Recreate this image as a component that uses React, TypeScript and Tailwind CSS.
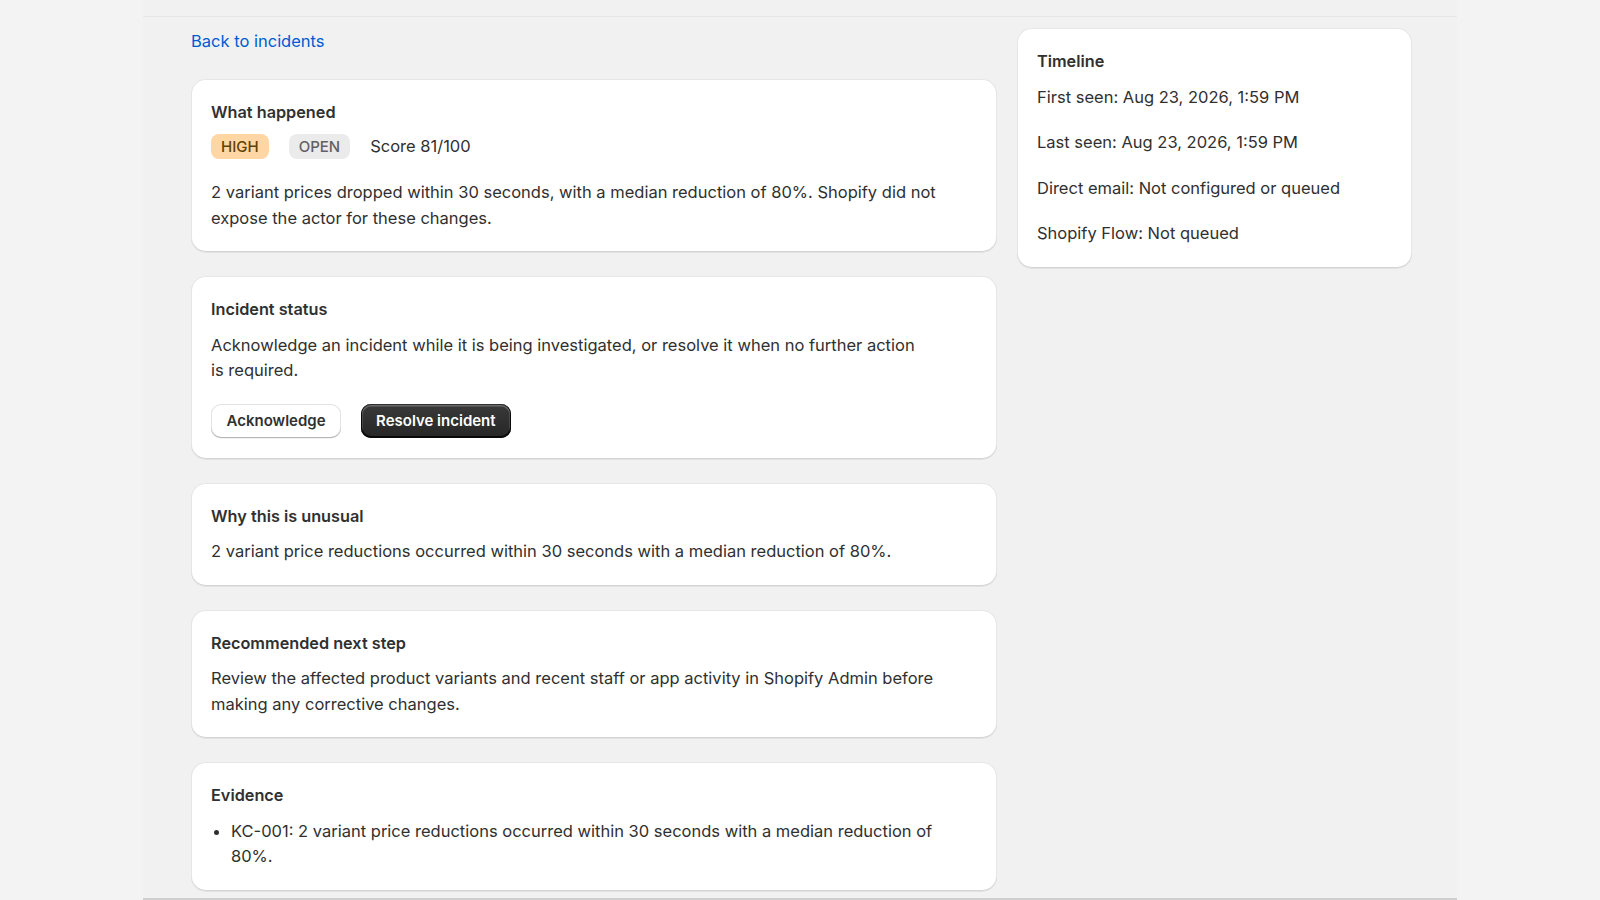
import React from 'react';

interface CardProps {
  title: string;
  children: React.ReactNode;
}

// Admin-style surface card with a soft inner edge
function Card({ title, children }: CardProps) {
  return (
    <section className="bg-white rounded-[15px] px-5 pt-[21px] pb-[21px] shadow-[0_1px_0_0_rgba(26,26,26,0.07),inset_0_-1px_0_0_#d4d4d4,inset_1px_0_0_0_#e6e6e6,inset_-1px_0_0_0_#e6e6e6,inset_0_1px_0_0_#e6e6e6]">
      <h2 className="font-semibold text-[16.25px] leading-[25.5px] text-[#303030]">{title}</h2>
      <div className="mt-[10px]">{children}</div>
    </section>
  );
}

const timeline = [
  'First seen: Aug 23, 2026, 1:59 PM',
  'Last seen: Aug 23, 2026, 1:59 PM',
  'Direct email: Not configured or queued',
  'Shopify Flow: Not queued',
];

export default function App() {
  return (
    <div className="min-h-[900px] bg-[#f3f3f3] font-[Inter,sans-serif] text-[#303030] text-[16.5px] leading-[25.5px]">
      <div className="w-[1314px] mx-auto h-[900px] bg-[#f1f1f1] border-b-2 border-[#cfcfcf] overflow-hidden">
        <div className="h-[17px] border-b border-[#e6e6e6]" />

        <div className="pl-[48px] pt-[11px] grid grid-cols-[806px_395px] gap-5 items-start">
          {/* Main column */}
          <div className="flex flex-col">
            <a href="#" className="block h-[51px] pt-px text-[#005bd3] hover:underline">
              Back to incidents
            </a>

            <div className="flex flex-col gap-6">
              <Card title="What happened">
                <div className="-mt-[2px] flex items-center gap-5">
                  <span className="h-[25px] px-[10px] rounded-[8px] bg-[#ffd6a4] text-[#5e4200] text-[15px] leading-[25px] font-medium">
                    HIGH
                  </span>
                  <span className="h-[25px] px-[10px] rounded-[8px] bg-[#ebebeb] text-[#616161] text-[15px] leading-[25px] font-medium">
                    OPEN
                  </span>
                  <span>Score 81/100</span>
                </div>
                <p className="mt-[21px]">
                  2 variant prices dropped within 30 seconds, with a median reduction of 80%. Shopify did not expose
                  the actor for these changes.
                </p>
              </Card>

              <Card title="Incident status">
                <p className="max-w-[712px]">
                  Acknowledge an incident while it is being investigated, or resolve it when no further action is
                  required.
                </p>
                <div className="mt-5 flex items-center gap-5">
                  <button
                    type="button"
                    className="h-[34px] px-[15.5px] rounded-[10px] bg-white text-[#303030] font-semibold text-[15px] shadow-[inset_0_-1px_0_0_#b5b5b5,inset_0_0_0_1px_#e3e3e3,0_1px_0_0_rgba(0,0,0,0.05)]"
                  >
                    Acknowledge
                  </button>
                  <button
                    type="button"
                    className="h-[34px] px-[15px] rounded-[10px] bg-gradient-to-b from-[#3a3a3a] to-[#262626] text-white font-semibold text-[15px] shadow-[inset_0_-1px_0_1px_rgba(0,0,0,0.8),inset_0_0_0_1px_#303030,inset_0_1px_0_1.5px_rgba(255,255,255,0.25)]"
                  >
                    Resolve incident
                  </button>
                </div>
              </Card>

              <Card title="Why this is unusual">
                <p>2 variant price reductions occurred within 30 seconds with a median reduction of 80%.</p>
              </Card>

              <Card title="Recommended next step">
                <p>
                  Review the affected product variants and recent staff or app activity in Shopify Admin before making
                  any corrective changes.
                </p>
              </Card>

              <Card title="Evidence">
                <ul className="list-disc pl-5 max-w-[725px]">
                  <li>
                    KC-001: 2 variant price reductions occurred within 30 seconds with a median reduction of 80%.
                  </li>
                </ul>
              </Card>
            </div>
          </div>

          {/* Side column */}
          <Card title="Timeline">
            <div className="flex flex-col gap-[20px]">
              {timeline.map((row) => (
                <p key={row}>{row}</p>
              ))}
            </div>
          </Card>
        </div>
      </div>
    </div>
  );
}
